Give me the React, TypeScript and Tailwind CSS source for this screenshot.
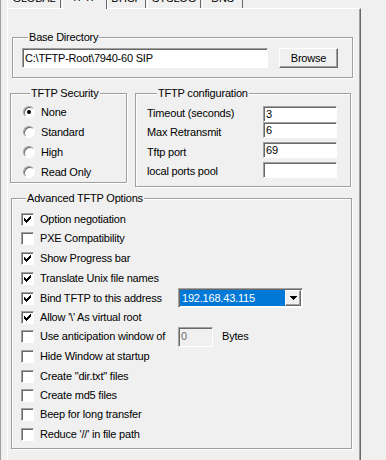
import React from 'react';

const sunken =
  'border border-t-[#a0a0a0] border-l-[#a0a0a0] border-r-white border-b-white shadow-[inset_1px_1px_0_#696969]';
const raised =
  'border border-t-white border-l-white border-r-[#696969] border-b-[#696969] shadow-[inset_-1px_-1px_0_#a0a0a0]';
const etched = 'border border-[#a0a0a0] shadow-[inset_1px_1px_0_#fff,1px_1px_0_#fff]';

function Group({
  label,
  legendClass,
  className,
  children,
}: {
  label: string;
  legendClass: string;
  className: string;
  children: React.ReactNode;
}) {
  return (
    <fieldset className={`${etched} ${className}`}>
      <legend className={`${legendClass} px-[1px] bg-[#f0f0f0] leading-[13px]`}>{label}</legend>
      {children}
    </fieldset>
  );
}

function Radio({ checked }: { checked?: boolean }) {
  return (
    <div
      className={`flex h-[12px] w-[12px] items-center justify-center rounded-full bg-white border border-t-[#a0a0a0] border-l-[#a0a0a0] border-r-white border-b-white shadow-[inset_1px_1px_0_#696969]`}
    >
      {checked && <div className="h-[4px] w-[4px] rounded-full bg-black" />}
    </div>
  );
}

function Check({ checked }: { checked?: boolean }) {
  return (
    <div className={`${sunken} flex h-[13px] w-[13px] shrink-0 items-center justify-center bg-white`}>
      {checked && (
        <svg width="7" height="7" viewBox="0 0 7 7" shapeRendering="crispEdges">
          <path
            d="M0 2h1v3h-1z M1 3h1v3h-1z M2 4h1v3h-1z M3 3h1v3h-1z M4 2h1v3h-1z M5 1h1v3h-1z M6 0h1v3h-1z"
            fill="#000"
          />
        </svg>
      )}
    </div>
  );
}

const tabs = [
  { name: 'GLOBAL', cls: 'w-[54px]' },
  { name: 'TFTP', cls: 'ml-[1px] w-[45px]', active: true },
  { name: 'DHCP', cls: 'w-[39px]' },
  { name: 'SYSLOG', cls: 'ml-[1px] w-[54px]' },
  { name: 'DNS', cls: 'ml-[1px] w-[41px]' },
];

const security = [
  { label: 'None', checked: true },
  { label: 'Standard' },
  { label: 'High' },
  { label: 'Read Only' },
];

const config = [
  { label: 'Timeout (seconds)', value: '3', row: 'h-[20px]', box: 'mt-[6px]' },
  { label: 'Max Retransmit', value: '6', row: 'h-[19px]', box: '' },
  { label: 'Tftp port', value: '69', row: 'h-[20px]', box: 'mt-[4px]' },
  { label: 'local ports pool', value: '', row: 'h-[19px]', box: 'mt-[4px]' },
];

type Opt = { label: string; checked?: boolean; h: string; extra?: 'bind' | 'window' };

const options: Opt[] = [
  { label: 'Option negotiation', checked: true, h: 'h-[20px]' },
  { label: 'PXE Compatibility', h: 'h-[19px]' },
  { label: 'Show Progress bar', checked: true, h: 'h-[20px]' },
  { label: 'Translate Unix file names', checked: true, h: 'h-[20px]' },
  { label: 'Bind TFTP to this address', checked: true, h: 'h-[20px]', extra: 'bind' },
  { label: "Allow '\\' As virtual root", checked: true, h: 'h-[19px]' },
  { label: 'Use anticipation window of', h: 'h-[19px]', extra: 'window' },
  { label: 'Hide Window at startup', h: 'h-[20px]' },
  { label: 'Create "dir.txt" files', h: 'h-[20px]' },
  { label: 'Create md5 files', h: 'h-[19px]' },
  { label: 'Beep for long transfer', h: 'h-[19px]' },
  { label: "Reduce '//' in file path", h: 'h-[20px]' },
];

export default function App() {
  return (
    <div className="h-[460px] w-[386px] overflow-hidden border-l border-[#a0a0a0] bg-[#f0f0f0] font-['Liberation_Sans',Arial,sans-serif] text-[11px] leading-[13px] tracking-[-0.2px] text-black">
      {/* tab strip, mostly scrolled off the top */}
      <div className="flex h-[8px] items-end pl-[6px]">
        {tabs.map((t) =>
          t.active ? (
            <div
              key={t.name}
              className={`relative z-10 -mb-px flex h-[24px] items-end justify-center border-l border-r border-l-white border-r-[#696969] bg-[#f0f0f0] pb-[5px] ${t.cls}`}
            >
              {t.name}
            </div>
          ) : (
            <div
              key={t.name}
              className={`flex h-[22px] items-end justify-center border-l border-r border-l-white border-r-[#696969] pb-[3px] ${t.cls}`}
            >
              {t.name}
            </div>
          )
        )}
      </div>

      <div className="ml-[6px] h-[452px] w-[354px] border-l border-r border-t border-l-white border-r-[#696969] border-t-white shadow-[inset_-1px_0_0_#a0a0a0]">
        <Group
          label="Base Directory"
          legendClass="ml-[6px]"
          className="ml-[4px] mt-[22px] w-[341px] pb-[9px] pl-[9px] pt-[4px]"
        >
          <div className="flex">
            <div className={`${sunken} flex h-[20px] w-[246px] items-center bg-white pl-[2px]`}>
              {'C:\\TFTP-Root\\7940-60 SIP'}
            </div>
            <div className={`${raised} ml-[11px] flex h-[20px] w-[59px] items-center justify-center`}>
              Browse
            </div>
          </div>
        </Group>

        <div className="mt-[9px] flex items-start">
          <Group
            label="TFTP Security"
            legendClass="ml-[7px]"
            className="ml-[2px] h-[96px] w-[117px] pl-[12px] pt-[2px]"
          >
            <div className="flex flex-col">
              {security.map((r) => (
                <div key={r.label} className="flex h-[20px] items-center">
                  <Radio checked={r.checked} />
                  <span className="ml-[6px]">{r.label}</span>
                </div>
              ))}
            </div>
          </Group>

          <Group
            label="TFTP configuration"
            legendClass="ml-[10px]"
            className="ml-[8px] h-[100px] w-[216px] pl-[11px]"
          >
            <div className="flex">
              <div className="mt-[3px] flex w-[116px] flex-col">
                {config.map((c) => (
                  <div key={c.label} className={`flex items-center ${c.row}`}>
                    {c.label}
                  </div>
                ))}
              </div>
              <div className="flex flex-col">
                {config.map((c) => (
                  <div
                    key={c.label}
                    className={`${sunken} flex h-[16px] w-[74px] items-center bg-white pl-[2px] ${c.box}`}
                  >
                    {c.value}
                  </div>
                ))}
              </div>
            </div>
          </Group>
        </div>

        <Group
          label="Advanced TFTP Options"
          legendClass="ml-[5px]"
          className="ml-[3px] mt-[5px] h-[257px] w-[341px] pl-[9px] pt-[4px]"
        >
          <div className="flex flex-col">
            {options.map((o) => (
              <div key={o.label} className={`flex items-center ${o.h}`}>
                <Check checked={o.checked} />
                <span className={`ml-[6px] ${o.extra ? 'w-[138px]' : ''}`}>{o.label}</span>
                {o.extra === 'bind' && (
                  <div className={`${sunken} flex h-[20px] w-[125px] bg-white p-[1px]`}>
                    <div className="flex flex-1 items-center bg-[#0078d7] pl-[2px] text-white">192.168.43.115</div>
                    <div className={`${raised} flex w-[16px] items-center justify-center bg-[#f0f0f0]`}>
                      <svg width="7" height="4" viewBox="0 0 7 4" shapeRendering="crispEdges">
                        <path d="M0 0h7v1h-7z M1 1h5v1h-5z M2 2h3v1h-3z M3 3h1v1h-1z" fill="#000" />
                      </svg>
                    </div>
                  </div>
                )}
                {o.extra === 'window' && (
                  <>
                    <div className={`${sunken} flex h-[20px] w-[35px] items-center bg-[#f0f0f0] pl-[2px] text-[#6d6d6d]`}>
                      0
                    </div>
                    <span className="ml-[9px]">Bytes</span>
                  </>
                )}
              </div>
            ))}
          </div>
        </Group>
      </div>
    </div>
  );
}
